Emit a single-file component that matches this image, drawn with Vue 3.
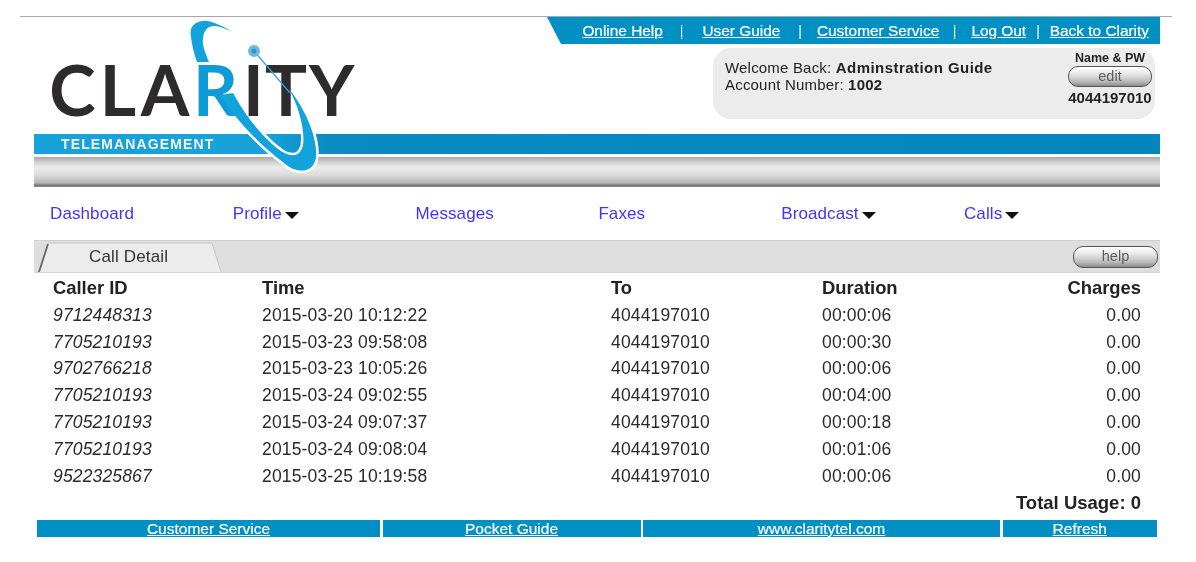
<script setup>
const links = ['Online Help', 'User Guide', 'Customer Service', 'Log Out', 'Back to Clarity']
const menu = [
  { label: 'Dashboard' },
  { label: 'Profile', caret: true },
  { label: 'Messages' },
  { label: 'Faxes' },
  { label: 'Broadcast', caret: true },
  { label: 'Calls', caret: true }
]
const rows = [
  ['9712448313', '2015-03-20 10:12:22', '00:00:06'],
  ['7705210193', '2015-03-23 09:58:08', '00:00:30'],
  ['9702766218', '2015-03-23 10:05:26', '00:00:06'],
  ['7705210193', '2015-03-24 09:02:55', '00:04:00'],
  ['7705210193', '2015-03-24 09:07:37', '00:00:18'],
  ['7705210193', '2015-03-24 09:08:04', '00:01:06'],
  ['9522325867', '2015-03-25 10:19:58', '00:00:06']
]
const footer = ['Customer Service', 'Pocket Guide', 'www.claritytel.com', 'Refresh']
const lowerSwoosh = 'M186 78 C200 100 225 128 250 146 C262 157 280 157 282 140 C284 120 270 90 255 72 C266 92 271 115 269 128 C266 141 256 140 247 134 C230 122 212 100 199 76 Z'
</script>

<template>
  <div class="page">
    <div class="rule"></div>
    <header class="head">
      <div class="head-top">
        <div class="right-col">
          <nav class="toplinks">
            <template v-for="(l, i) in links" :key="l">
              <a href="#" class="toplink">{{ l }}</a>
              <span v-if="i < links.length - 1" class="sep" :class="'s' + i">|</span>
            </template>
          </nav>
          <div class="info">
            <div class="welcome">
              <div>Welcome Back: <b class="name">Adminstration Guide</b></div>
              <div>Account Number: <b>1002</b></div>
            </div>
            <div class="acct">
              <div class="acct-label">Name &amp; PW</div>
              <div class="pill edit">edit</div>
              <div class="acct-num">4044197010</div>
            </div>
          </div>
        </div>
      </div>
      <div class="blue-band"><span class="tele">TELEMANAGEMENT</span></div>
      <div class="grey-band"></div>

      <div class="logo">
        <div class="wordmark">
          <span class="l-c">C</span><span class="l-l">L</span><span class="l-a">A</span><span class="l-r">R</span><span class="l-i">I</span><span class="l-t">T</span><span class="l-y">Y</span>
        </div>
        <svg class="swoosh" width="330" height="160" viewBox="0 0 330 160" aria-hidden="true">
          <defs>
            <clipPath id="halo-clip"><rect x="200" y="116" width="130" height="50" /></clipPath>
          </defs>
          <path class="sw" d="M198 15 C185 7 175 3 169 4 C160 5 155 10 157 20 C158 28 160 37 163 45 L175 45 C171 35 168 28 169 21 C170 13 174 9 180 9 C186 9 192 12 198 15 Z" />
          <path class="halo" clip-path="url(#halo-clip)" :d="lowerSwoosh" />
          <path class="sw" :d="lowerSwoosh" />
          <line x1="220" y1="34" x2="256" y2="76" class="thin" />
          <circle cx="220" cy="34" r="6" class="dot" />
          <circle cx="220" cy="34" r="2.5" class="dot-in" />
        </svg>
      </div>
    </header>

    <nav class="menu">
      <a v-for="m in menu" :key="m.label" href="#" class="menu-item">
        {{ m.label }}<i v-if="m.caret" class="caret"></i>
      </a>
    </nav>

    <div class="tabbar">
      <div class="tab">
        <svg class="tab-shape" width="186" height="31" viewBox="0 0 186 31" aria-hidden="true">
          <path d="M12 2 H176 L185 31 H2 Z" fill="#ececec" />
          <path d="M12 2 H176 L185 31" fill="none" stroke="#c6c6c6" stroke-width="1" />
          <path d="M12 3 L3 31" fill="none" stroke="#666" stroke-width="1.8" />
        </svg>
        <span class="tab-label">Call Detail</span>
      </div>
      <div class="pill help">help</div>
    </div>

    <section class="table">
      <div class="tr th">
        <div>Caller ID</div><div>Time</div><div>To</div><div>Duration</div><div class="num">Charges</div>
      </div>
      <div v-for="(r, i) in rows" :key="i" class="tr">
        <div class="cid">{{ r[0] }}</div><div>{{ r[1] }}</div><div>4044197010</div><div>{{ r[2] }}</div><div class="num">0.00</div>
      </div>
      <div class="total">Total Usage: 0</div>
    </section>

    <footer class="foot">
      <a v-for="f in footer" :key="f" href="#" class="foot-cell">{{ f }}</a>
    </footer>
  </div>
</template>

<style>
html, body { background: #fff; }
</style>

<style scoped>
.page {
  width: 1196px;
  height: 562px;
  overflow: hidden;
  background: #fff;
  padding-top: 16px;
  box-sizing: border-box;
  font-family: "Liberation Sans", Arial, sans-serif;
  color: #222;
  filter: blur(0.4px);
}
.rule {
  height: 1px;
  margin: 0 24px 0 20px;
  background: #a8a8a8;
}
.head {
  position: relative;
  margin: 0 36px 0 34px;
}
.head-top {
  display: flex;
  justify-content: flex-end;
  height: 117px;
}
.right-col { width: 613px; }
.toplinks {
  height: 27px;
  background: #0090c4;
  clip-path: polygon(0 0, 100% 0, 100% 100%, 14px 100%);
  display: flex;
  align-items: center;
  justify-content: flex-end;
  padding-right: 11px;
  box-sizing: border-box;
  font-size: 15.4px;
  color: #fff;
}
.toplink { color: #fff; text-decoration: underline; -webkit-text-stroke: 0.2px #fff; white-space: nowrap; }
.sep { font-size: 14px; }
.s0 { margin: 0 19px 0 17px; }
.s1 { margin: 0 15px 0 18px; }
.s2 { margin: 0 15px 0 13.5px; }
.s3 { margin: 0 10px; }
.info {
  margin: 4px 5px 0 auto;
  width: 442px;
  height: 71px;
  background: #ececec;
  border-radius: 18px;
  box-sizing: border-box;
  padding: 3px 1px 0 12px;
  display: flex;
  justify-content: space-between;
  font-size: 15px;
  line-height: 17px;
}
.welcome { padding-top: 8px; letter-spacing: 0.19px; }
.name { letter-spacing: 0.45px; }
.acct { width: 88px; text-align: center; color: #222; }
.acct-label { font-size: 12.5px; font-weight: 700; line-height: 14px; }
.acct-num { font-size: 15px; font-weight: 700; line-height: 17px; margin-top: 2px; white-space: nowrap; }
.pill {
  box-sizing: border-box;
  border: 1.5px solid #555;
  border-radius: 10px;
  background: linear-gradient(#fff 0%, #e8e8e8 35%, #bcbcbc 75%, #8c8c8c 100%);
  color: #5c5c5c;
  text-align: center;
  font-size: 14.5px;
}
.edit { width: 84px; height: 21px; line-height: 18px; margin: 1px auto 0; }
.help { width: 85px; height: 22px; line-height: 19px; margin: 5px 2px 0 0; }

.blue-band {
  height: 20px;
  background: linear-gradient(90deg, #18a2da 0, #18a2da 230px, #0a8cc2 290px, #0085bd 100%);
  display: flex;
  align-items: center;
  padding-left: 27px;
}
.tele {
  color: #f4f4f4;
  font-weight: 700;
  font-size: 14px;
  letter-spacing: 1.12px;
}
.grey-band {
  height: 30px;
  margin-top: 3px;
  background: linear-gradient(#a8a8a8 0, #c8c8c8 4px, #ececec 10px, #dcdcdc 18px, #b4b4b4 26px, #686868 29px, #b0b0b0 30px);
}
.logo {
  position: absolute;
  left: 0;
  top: 0;
  width: 330px;
  height: 160px;
  pointer-events: none;
}
.wordmark {
  position: absolute;
  left: 12px;
  top: 30px;
  display: flex;
  font-family: Lato, "Open Sans", sans-serif;
  font-weight: 700;
  font-size: 70px;
  line-height: 84px;
  color: #2e2b2c;
}
.wordmark span { display: block; text-align: center; }
.l-c { width: 53px; }
.l-l { width: 38px; }
.l-a { width: 56px; }
.l-r { width: 50px; color: #0f9cd6; text-align: left !important; }
.l-i { width: 20px; }
.l-t { width: 46px; }
.l-y { width: 43px; }
.swoosh { position: absolute; left: 0; top: 0; overflow: visible; }
.sw { fill: #12a2dc; }
.halo { fill: #fff; stroke: #fff; stroke-width: 5; }
.thin { stroke: #2aa6da; stroke-width: 1.2; }
.dot { fill: #6cb8de; }
.dot-in { fill: #3a8fc0; }

.menu {
  height: 53px;
  display: grid;
  grid-template-columns: repeat(6, 182.8px);
  align-items: center;
  padding-left: 50px;
  box-sizing: border-box;
  font-size: 17px;
}
.menu-item {
  color: #4433ff;
  text-decoration: none;
  display: flex;
  align-items: center;
  letter-spacing: 0.1px;
}
.caret {
  width: 0;
  height: 0;
  margin: 3px 0 0 3px;
  border-left: 7px solid transparent;
  border-right: 7px solid transparent;
  border-top: 7px solid #111;
}
.tabbar {
  height: 33px;
  margin: 0 36px 0 34px;
  background: #dedede;
  border-top: 1px solid #cfcfcf;
  border-bottom: 1px solid #d4d4d4;
  box-sizing: border-box;
  display: flex;
  justify-content: space-between;
  align-items: flex-start;
}
.tab {
  position: relative;
  width: 186px;
  height: 31px;
  margin-left: 2px;
}
.tab-shape { position: absolute; left: 0; top: 0; }
.tab-label {
  position: absolute;
  left: 53px;
  top: 6px;
  font-size: 17px;
  line-height: 20px;
  color: #333;
  letter-spacing: 0.15px;
}
.table {
  margin: 0 36px 0 34px;
  padding: 2px 19px 0;
  font-size: 17.5px;
  color: #2a2a2a;
}
.tr {
  display: grid;
  grid-template-columns: 209px 349px 211px 1fr auto;
  grid-auto-flow: column;
  height: 26.83px;
  line-height: 26.83px;
  letter-spacing: 0.15px;
}
.tr > .num { grid-column: 5; justify-self: end; text-align: right; }
.th { font-weight: 700; color: #222; font-size: 18.4px; letter-spacing: 0; }
.cid { font-style: italic; }
.total {
  text-align: right;
  font-weight: 700;
  font-size: 18.5px;
  line-height: 26px;
  height: 26px;
  color: #222;
}
.foot {
  margin: 4px 39px 0 37px;
  display: grid;
  grid-template-columns: 343px 258px 357px 1fr;
  column-gap: 2.5px;
  height: 17px;
}
.foot-cell {
  background: #0090c4;
  color: #fff;
  text-align: center;
  font-size: 15.5px;
  line-height: 17px;
  text-decoration: underline;
  -webkit-text-stroke: 0.2px #fff;
}
</style>
